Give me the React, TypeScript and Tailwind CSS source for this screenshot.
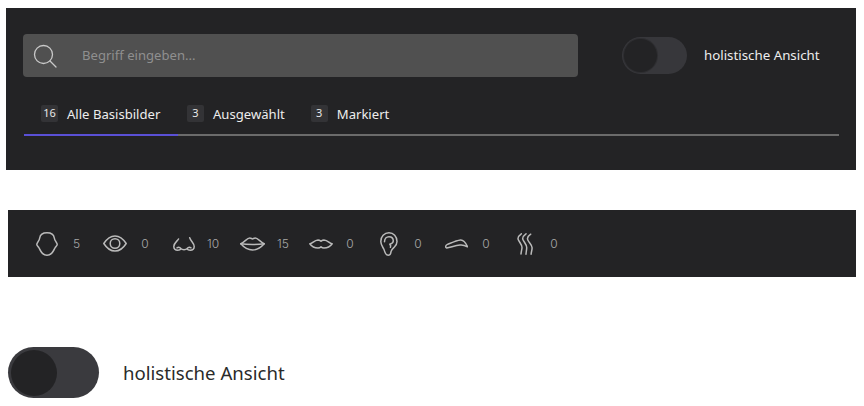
import React from "react";

const font = { fontFamily: '"Noto Sans", "Lato", sans-serif' };

function Toggle({ big }: { big?: boolean }) {
  if (big) {
    return (
      <div className="flex h-[51px] w-[91px] items-center rounded-full bg-[#3a3a3e] pl-[3px]">
        <div className="h-[46px] w-[46px] rounded-full bg-[#232325]" />
      </div>
    );
  }
  return (
    <div className="flex h-[37px] w-[65px] items-center rounded-full bg-[#37373b] pl-[2px]">
      <div className="h-[33px] w-[33px] rounded-full bg-[#232325] ring-1 ring-[#2e2e31]" />
    </div>
  );
}

function Tab({ n, label, active }: { n: string; label: string; active?: boolean }) {
  return (
    <div className={`flex h-[33px] items-start gap-[9px] ${active ? "w-[154px] pl-[17px]" : ""}`}>
      <span className="flex h-[17px] w-[17px] items-center justify-center rounded-[2px] bg-[#333336] text-[11px] text-[#e8e8e8]">{n}</span>
      <span className="text-[13.100px] leading-[18px] text-[#ededed]">{label}</span>
    </div>
  );
}

const stroke = { fill: "none", stroke: "#bababa", strokeWidth: 1.5, strokeLinecap: "round" as const, strokeLinejoin: "round" as const };

const metrics = [
  {
    w: 22, h: 24, n: "5", num: "w-[7px]", cls: "ml-0 gap-[15px]",
    d: <path d="M11 .8C7 .8 4.200 2.500 3.700 6 3.500 7.500 3 8.500 2 9.800 1.200 11 .8 11.500.8 12.500c0 1 .9 1.500 2 3C3.500 16.800 4 18 5 19.500c1.500 2.500 3.500 3.700 6 3.700s4.500-1.200 6-3.700c1-1.500 1.500-2.700 2.200-4 1.100-1.500 2-2 2-3 0-1-.4-1.500-1.200-2.700-1-1.300-1.500-2.300-1.700-3.800C17.800 2.500 15 .8 11 .8z" />,
  },
  {
    w: 24, h: 17, n: "0", num: "w-[8px]", cls: "ml-[23px] gap-[14px]",
    d: (
      <>
        <path d="M.8 8.500C4 3.500 8 .9 12 .9s8 2.600 11.200 7.600C20 13.500 16 16.100 12 16.100S4 13.500.8 8.500z" />
        <circle cx="12" cy="8.500" r="4.800" />
      </>
    ),
  },
  {
    w: 22, h: 14, n: "10", num: "w-[12px]", cls: "ml-[24px] gap-[12px]",
    d: <path d="M5.500 2C4.500 4 .8 6 .8 9.500c0 2.500 2 3.700 4 3.700 1.700 0 2.700-.6 3.200-1.400.7.700 1.700.9 3 .9s2.300-.2 3-.9c.5.8 1.500 1.400 3.200 1.400 2 0 4-1.200 4-3.700 0-3.500-3.200-5-4.500-8.700M8 11.800C7.500 10.300 5.500 10 4 10.800M14 11.800c.5-1.500 2.500-1.800 4-1" />,
  },
  {
    w: 25, h: 14, n: "15", num: "w-[12px]", cls: "ml-[21px] gap-[12px]",
    d: (
      <>
        <path d="M.8 6.800C4.500 5.300 7 1 9.800 1c1.200 0 1.900.9 2.700.9s1.500-.9 2.700-.9c2.800 0 5.300 4.300 9 5.800-3.400 3.900-7.500 6.200-11.700 6.200S4.200 10.700.8 6.800z" />
        <path d="M.8 6.800c4 .7 8 .8 11.700.8s7.700-.1 11.700-.8" />
      </>
    ),
  },
  {
    w: 24, h: 10, n: "0", num: "w-[8px]", cls: "ml-[20px] gap-[13px]",
    d: <path d="M.8 4.800C3.500 5 5 1 9 .9c1.500 0 2.300.8 3 1.400.7-.6 1.500-1.400 3-1.400 4 .1 5.500 4.100 8.200 3.900-2 2.800-5.200 4.300-8.200 4.300-1.300 0-2.300-.5-3-1.200-.7.700-1.700 1.200-3 1.200-3 0-6.200-1.500-8.200-4.300z" />,
  },
  {
    w: 18, h: 24, n: "0", num: "w-[8px]", cls: "ml-[26px] gap-[16px]",
    d: (
      <>
        <path d="M17 9.500C17 4.500 13.500.8 9 .8 4.300.8.800 4.500.8 9.500c0 3.500 2 5.500 3.200 8 .9 2 1 5.700 4.300 5.700 2.400 0 2.500-2 2.700-3.500.3-2 1.500-3 3.200-4.500 1.700-1.500 2.800-3 2.800-5.700z" />
        <path d="M4.500 9.800C4.500 6.800 6.500 4.700 9 4.700s4.300 1.800 4.300 4.300c0 2-1.800 2.700-3.500 3.300 1 .8 1.200 1.800.6 3" />
      </>
    ),
  },
  {
    w: 23, h: 10, n: "0", num: "w-[8px]", cls: "ml-[23px] gap-[14px]",
    d: <path d="M1.600 8.900C.2 8.700.3 6.300 2.500 5.400 6.500 3.800 11.500 1.500 15.500 1c3.500-.3 5.500 3.500 7 6.800-2.300-1.200-5-2-7.500-1.700-4.500.5-9 2-13.400 2.800z" />,
  },
  {
    w: 16, h: 22, n: "0", num: "w-[8px]", cls: "ml-[27px] gap-[17px]",
    d: <path d="M4.300.8C1.500 2.800.3 4.500 1.300 6.800 2.500 9.500 5 11.500 5 14.500c0 2-.8 3.500-1 6.500M9 .8C6.200 2.800 5 4.500 6 6.800c1.200 2.700 3.700 4.700 3.700 7.700 0 2.500-.5 4-.7 6.700M13.700 1.200C11 3 9.800 4.700 10.800 7c1.200 2.700 4.300 4.700 4.300 7.700 0 2.500-.8 4-1 6.500" />,
  },
];

export default function App() {
  return (
    <div className="relative h-[406px] w-[864px] overflow-hidden bg-white" style={font}>
      <div className="ml-[6px] mt-2 flex h-[162px] w-[850px] flex-col bg-[#232325] pl-[18px] pr-[17px] pt-[26px]">
        <div className="-ml-px flex items-center">
          <div className="flex h-[43px] w-[555px] items-center rounded-[4px] bg-[#505050] pl-[10px]">
            <svg width="24" height="24" viewBox="0 0 24 24" fill="none" stroke="#c9c9c9" strokeWidth="1.300" strokeLinecap="round">
              <circle cx="10.500" cy="10.500" r="9" />
              <path d="M17 17l6 6" />
            </svg>
            <span className="ml-[25px] text-[13.100px] text-[#8f8f8f]">Begriff eingeben...</span>
          </div>
          <div className="ml-[44px]"><Toggle /></div>
          <span className="ml-[17px] text-[13.300px] text-[#ededed]">holistische Ansicht</span>
        </div>
        <div className="mt-[28px] flex h-[31px] w-[815px] items-start border-b-2 border-[#6b6b6b]">
          <div className="-mb-[2px] flex h-[31px] items-start border-b-2 border-[#5a50d6]">
            <Tab n="16" label="Alle Basisbilder" active />
          </div>
          <div className="ml-[9px]"><Tab n="3" label="Ausgewählt" /></div>
          <div className="ml-[26px]"><Tab n="3" label="Markiert" /></div>
        </div>
      </div>

      <div className="ml-2 mt-10 flex h-[67px] w-[848px] items-center bg-[#232325] pl-[28px]">
        {metrics.map((m, i) => (
          <div key={i} className={`flex items-center ${m.cls}`}>
            <svg width={m.w} height={m.h} viewBox={`0 0 ${m.w} ${m.h}`} {...stroke}>{m.d}</svg>
            <span className={`${m.num} text-center text-[12px] font-light text-[#a8a8a8]`} style={{ fontFamily: '"Inter", sans-serif' }}>{m.n}</span>
          </div>
        ))}
      </div>

      <div className="ml-2 mt-[70px] flex items-center gap-[24px]">
        <Toggle big />
        <span className="text-[18.600px] text-[#2a2a2a]">holistische Ansicht</span>
      </div>
    </div>
  );
}
